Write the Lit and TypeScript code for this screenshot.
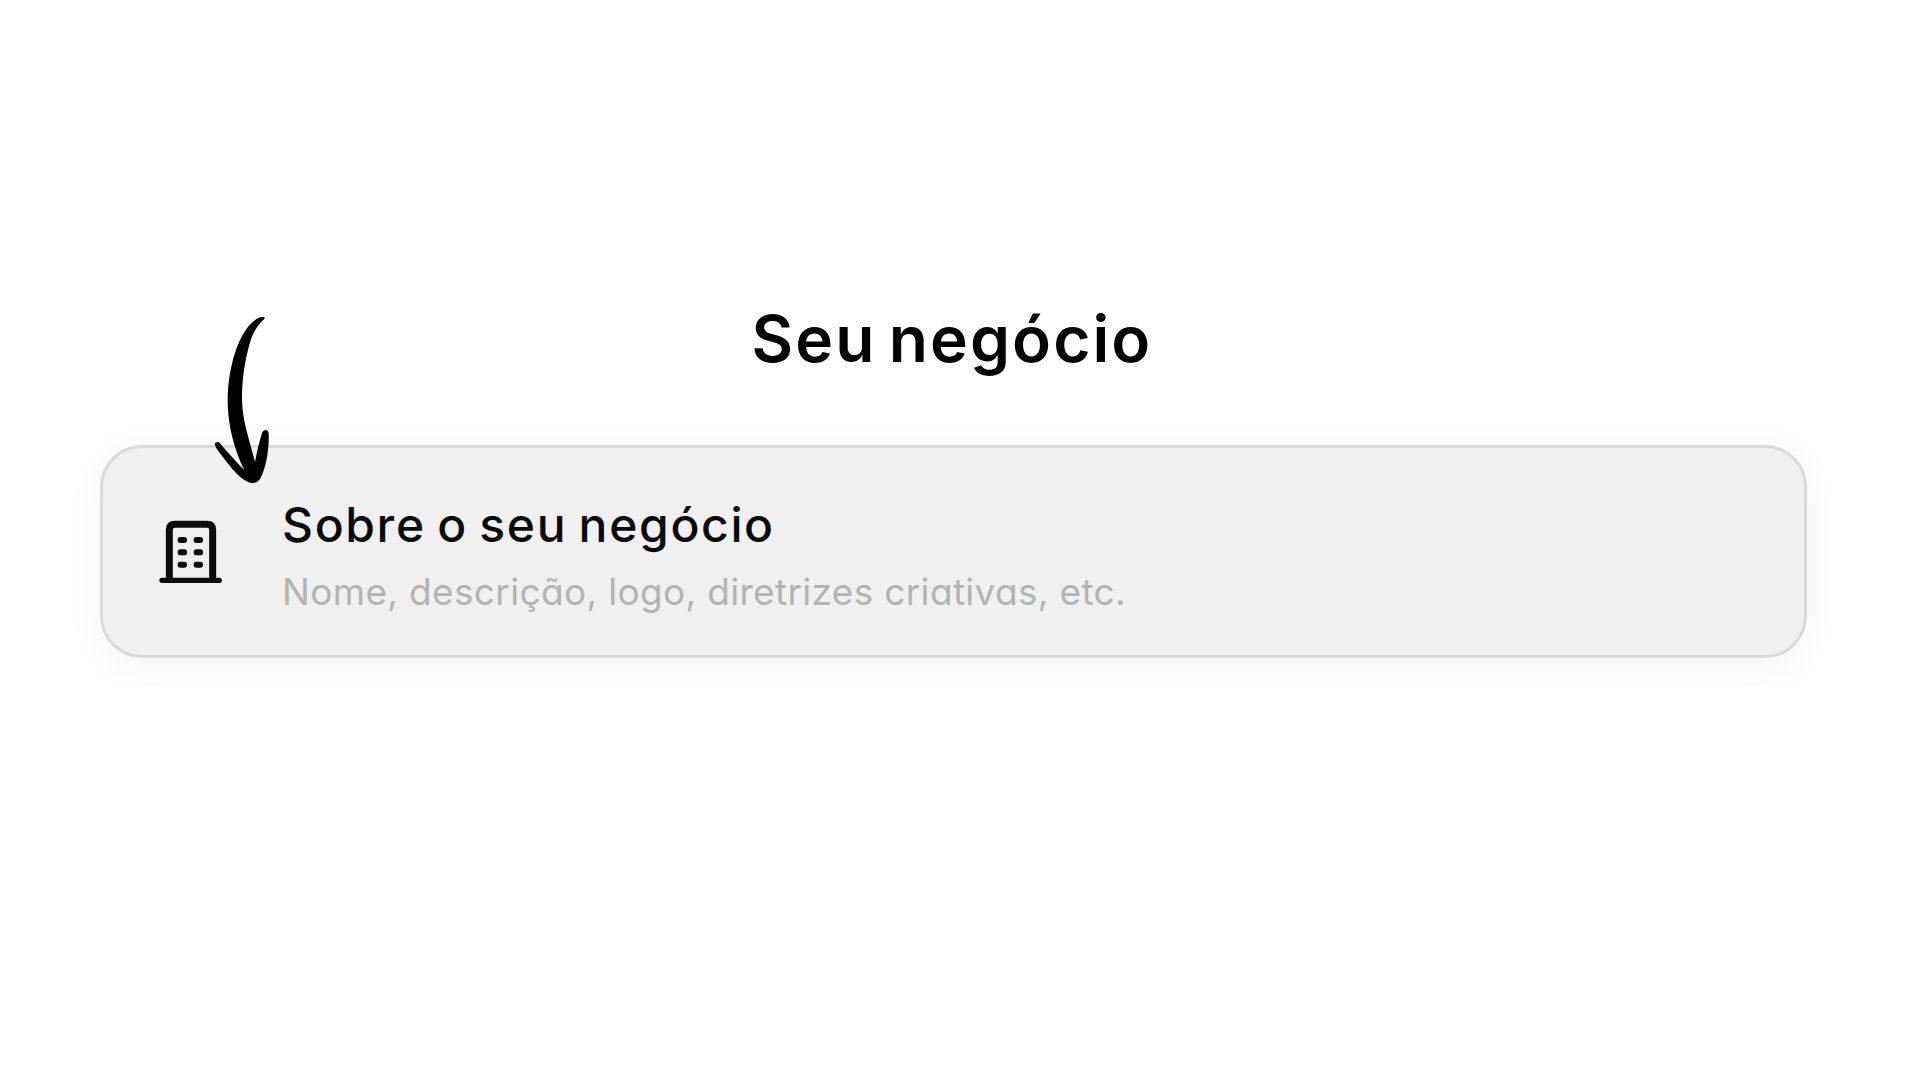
import { LitElement, css, html, svg } from 'lit';
import { customElement, property } from 'lit/decorators.js';

const WINDOW_COLUMNS = [127, 175];
const WINDOW_ROWS = [120, 157, 194];

@customElement('building-icon')
export class BuildingIcon extends LitElement {
  static styles = css`
    :host {
      display: block;
      flex: none;
    }

    .icon {
      display: block;
      width: 64px;
      height: 68px;
    }
  `;

  render() {
    return html`
      <svg class="icon" viewBox="54 54 192 204" fill="none" stroke="#0c0c0c" aria-hidden="true">
        <path d="M88 240V90Q88 73 105 73H201Q218 73 218 90V240" stroke-width="21" />
        <path d="M66 241H238" stroke-width="16" stroke-linecap="round" />
        ${WINDOW_ROWS.map((y) =>
          WINDOW_COLUMNS.map(
            (x) => svg`
              <rect x=${x - 14} y=${y - 9} width="28" height="18" rx="8" fill="#0c0c0c" stroke="none" />
            `
          )
        )}
      </svg>
    `;
  }
}

@customElement('settings-card')
export class SettingsCard extends LitElement {
  static styles = css`
    :host {
      display: block;
    }

    .card {
      box-sizing: border-box;
      display: flex;
      align-items: center;
      gap: 60px;
      height: 213px;
      padding: 0 55px;
      background: #f0f0f0;
      border: 3px solid #dadada;
      border-radius: 42px;
      box-shadow: 0 8px 40px rgba(0, 0, 0, 0.05);
    }

    .text {
      display: flex;
      flex-direction: column;
      gap: 7px;
      padding-top: 10px;
      white-space: nowrap;
    }

    .title {
      color: #0a0a0a;
      font-size: 48px;
      font-weight: 500;
      line-height: 64px;
      letter-spacing: 1.65px;
      word-spacing: -3px;
    }

    .description {
      color: #b3b3b3;
      font-size: 37px;
      font-weight: 400;
      line-height: 56px;
      letter-spacing: 0.33px;
    }
  `;

  @property() heading = '';
  @property() description = '';

  render() {
    return html`
      <div class="card">
        <building-icon></building-icon>
        <div class="text">
          <span class="title">${this.heading}</span>
          <span class="description">${this.description}</span>
        </div>
      </div>
    `;
  }
}

@customElement('app-root')
export class AppRoot extends LitElement {
  static styles = css`
    :host {
      display: block;
      position: relative;
      box-sizing: border-box;
      height: 1080px;
      padding-top: 289px;
      overflow: hidden;
      background: #fff;
      font-family: Inter, 'Open Sans', sans-serif;
      /* single-storey a */
      font-feature-settings: 'cv11' 1;
    }

    .heading {
      margin: 0;
      padding-right: 16px;
      color: #000;
      font-size: 64px;
      font-weight: 600;
      line-height: 100px;
      letter-spacing: 2.1px;
      word-spacing: -6px;
      text-align: center;
    }

    /* cuts the card shadow off just below the card */
    .list {
      padding: 56px 113px 29px 100px;
      overflow: hidden;
    }

    .arrow {
      position: absolute;
      top: 300px;
      left: 190px;
      width: 110px;
      height: 200px;
    }
  `;

  render() {
    return html`
      <h1 class="heading">Seu negócio</h1>
      <div class="list">
        <settings-card
          heading="Sobre o seu negócio"
          description="Nome, descrição, logo, diretrizes criativas, etc."
        ></settings-card>
      </div>
      <svg class="arrow" viewBox="0 0 330 600" aria-hidden="true">
        <path
          d="M222 52C212 49 200 55 187 67C142 108 113 208 113 305C114 375 131 445 163 510C140 488 117 462 90 430C85 423 74 425 75 434C76 442 88 457 98 470C124 505 154 540 180 548C190 551 203 548 210 537C229 505 238 440 236 400C235 387 220 387 216 400C208 425 201 455 195 486C181 428 157 365 156 300C155 240 166 170 184 115C193 91 207 71 222 58Q226 54 222 52Z"
        />
      </svg>
    `;
  }
}
